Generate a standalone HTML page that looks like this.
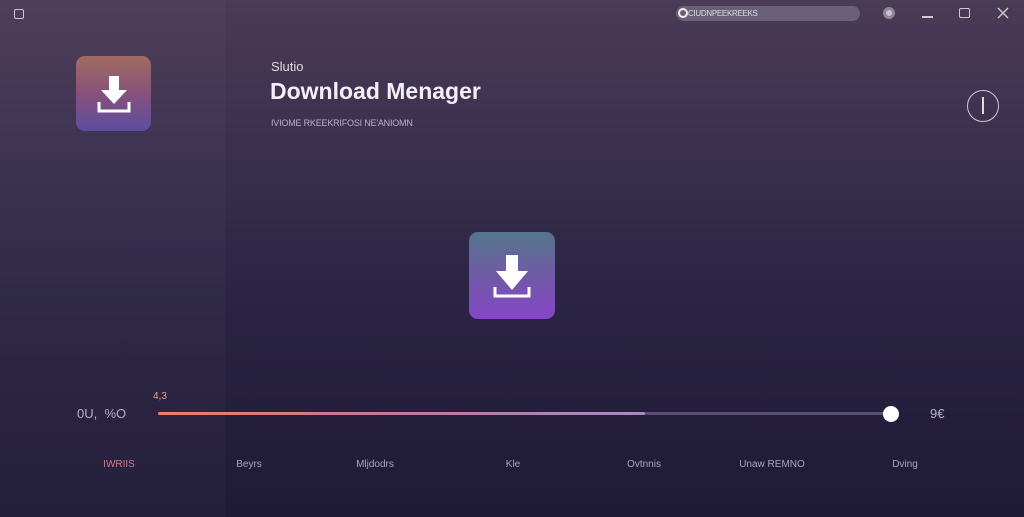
<!DOCTYPE html>
<html><head><meta charset="utf-8"><style>
*{margin:0;padding:0;box-sizing:border-box}
body{width:1024px;height:517px;overflow:hidden;font-family:"Liberation Sans",sans-serif;background:linear-gradient(180deg,#4a3b56 0%,#3a2f4f 30%,#2a2343 60%,#1f1a37 100%);position:relative;color:#e8e4ee}
.lp{position:absolute;left:0;top:0;width:225px;height:517px;background:rgba(255,255,255,0.025)}
.a{position:absolute}
.ic{border-radius:9px;display:flex;align-items:center;justify-content:center}
.lab{position:absolute;top:459px;font-size:10px;color:#a9a3bd;transform:translateX(-50%)}
</style></head><body>
<div class="lp"></div>
<div class="a" style="left:14px;top:9px;width:10px;height:10px;border:1.5px solid #c9c3d3;border-radius:2px"></div>
<div class="a" style="left:676px;top:6px;width:184px;height:15px;border-radius:8px;background:#6a5f78"></div>
<div class="a" style="left:678px;top:8px;width:10px;height:10px;border-radius:50%;border:2px solid #eee"></div>
<div class="a" style="left:688px;top:9px;font-size:8px;color:#ddd;letter-spacing:-0.3px">CIUDNPEEKREEKS</div>
<div class="a" style="left:883px;top:7px;width:12px;height:12px;border-radius:50%;background:#c7c1cf;border:3px solid #8f8699"></div>
<div class="a" style="left:922px;top:16px;width:11px;height:1.5px;background:#ccc"></div>
<div class="a" style="left:959px;top:8px;width:11px;height:10px;border:1.5px solid #ccc;border-radius:2px"></div>
<svg class="a" style="left:997px;top:7px" width="12" height="12"><path d="M1 1L11 11M11 1L1 11" stroke="#ccc" stroke-width="1.4"/></svg>
<div class="a ic" style="left:76px;top:56px;width:75px;height:75px;background:linear-gradient(180deg,#a06c5f,#84507f 55%,#5a4ea0)">
<svg width="36" height="40" viewBox="0 0 36 40"><path d="M13 2h10v14h8L18 30 5 16h8z" fill="#fff"/><path d="M3 28v9h30v-9" stroke="#fff" stroke-width="3" fill="none"/></svg></div>
<div class="a" style="left:271px;top:59px;font-size:13px;color:#ddd">Slutio</div>
<div class="a" style="left:270px;top:78px;font-size:23px;font-weight:bold;color:#f2eff5">Download Menager</div>
<div class="a" style="left:271px;top:118px;font-size:9px;color:#b8b1c4;letter-spacing:-0.2px">IVIOME RKEEKRIFOSI NE'ANIOMN</div>
<div class="a" style="left:967px;top:90px;width:32px;height:32px;border-radius:50%;border:1.5px solid #cfc9d7"></div>
<div class="a" style="left:982px;top:97px;width:2px;height:17px;background:#ddd"></div>
<div class="a ic" style="left:469px;top:232px;width:86px;height:87px;background:linear-gradient(180deg,#55758c,#6f5aa5 50%,#8646c8)">
<svg width="40" height="46" viewBox="0 0 40 46"><path d="M14 2h12v16h10L20 37 4 18h10z" fill="#fff"/><path d="M3 34v9h34v-9" stroke="#fff" stroke-width="3" fill="none"/></svg></div>
<div class="a" style="left:153px;top:391px;font-size:10px;color:#e4a48e">4,3</div>
<div class="a" style="left:77px;top:406px;font-size:13px;color:#b5afc2">0U,&nbsp;&nbsp;%O</div>
<div class="a" style="left:158px;top:412px;width:733px;height:3px;background:#5a4f72;border-radius:2px"></div>
<div class="a" style="left:158px;top:412px;width:487px;height:3px;background:linear-gradient(90deg,#ef7c68,#c07a9a 50%,#a889c4);border-radius:2px"></div>
<div class="a" style="left:883px;top:406px;width:16px;height:16px;border-radius:50%;background:#fff"></div>
<div class="a" style="left:930px;top:406px;font-size:13px;color:#b5afc2">9€</div>
<div class="lab" style="left:119px;color:#d07a88">IWRIIS</div>
<div class="lab" style="left:249px">Beyrs</div>
<div class="lab" style="left:375px">Mljdodrs</div>
<div class="lab" style="left:513px">Kle</div>
<div class="lab" style="left:644px">Ovtnnis</div>
<div class="lab" style="left:772px">Unaw REMNO</div>
<div class="lab" style="left:905px">Dving</div>
</body></html>
